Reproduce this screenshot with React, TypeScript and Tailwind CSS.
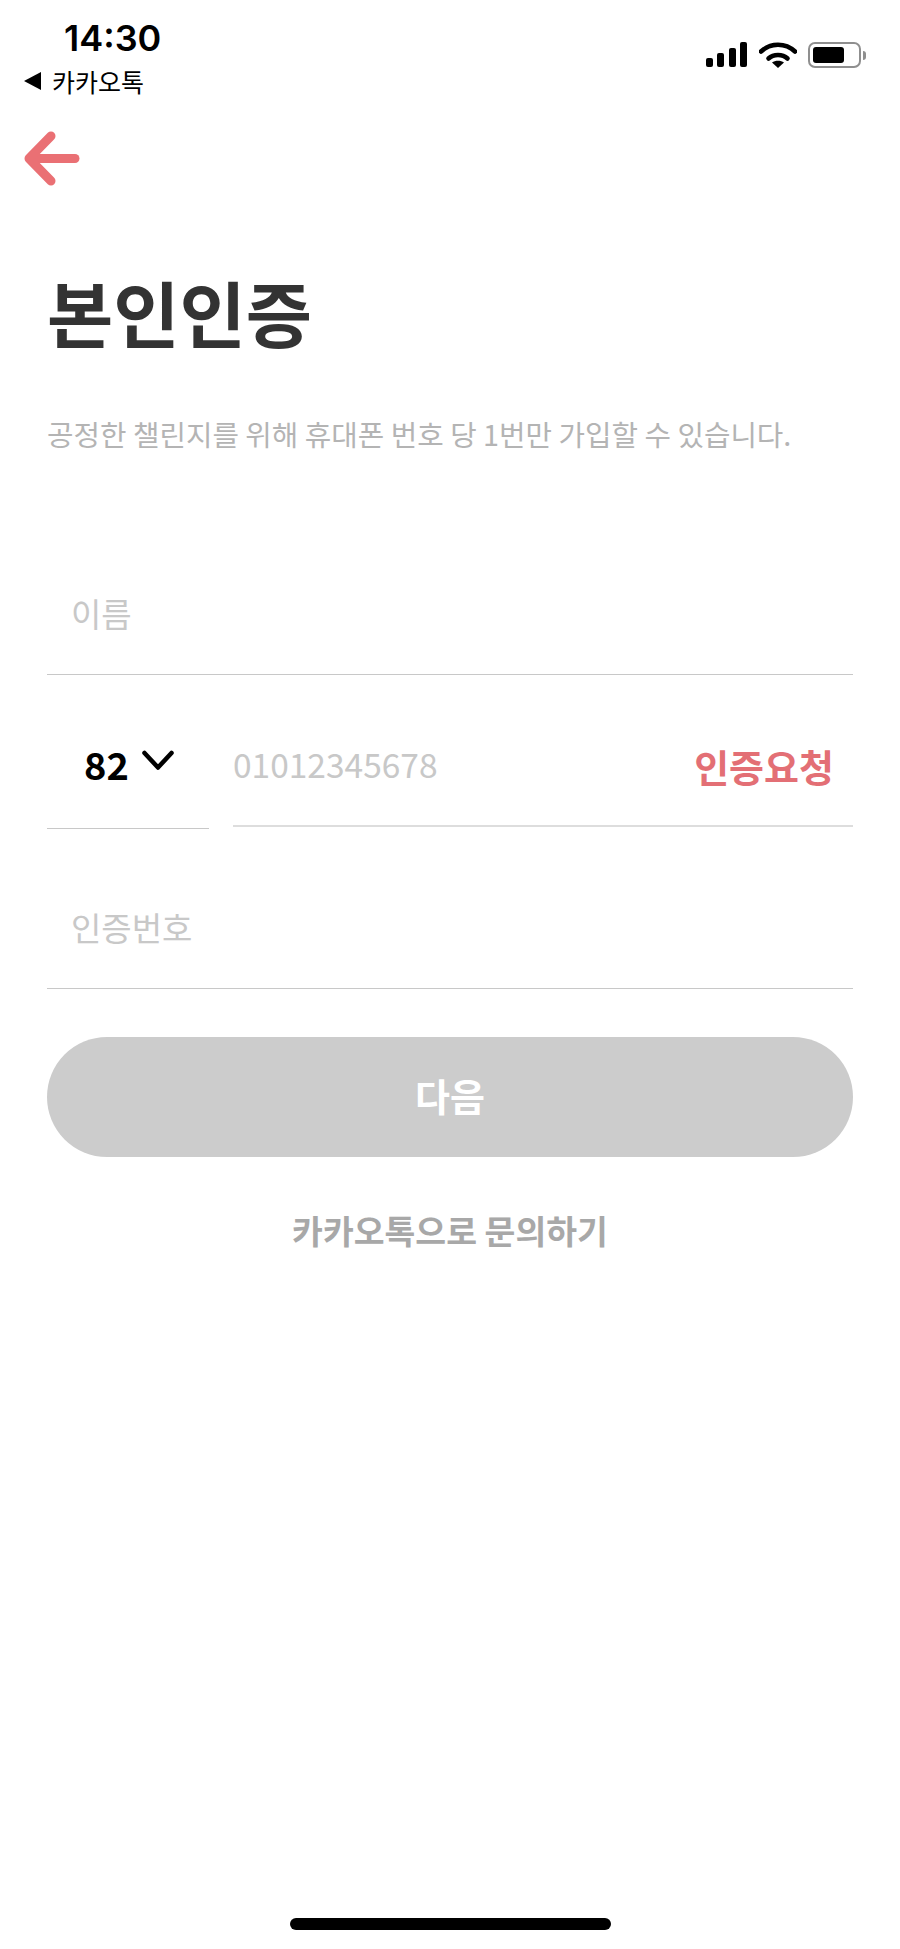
import React from "react";

const krFont = "font-['Noto_Sans_CJK_KR','Noto_Sans',sans-serif]";

const StatusIcons = () => (
  <div className="flex items-center gap-[11px]">
    <svg width="42" height="26" viewBox="0 0 42 26" fill="#000">
      <rect x="0" y="16" width="7" height="9" rx="2" />
      <rect x="11" y="11" width="7" height="14" rx="2" />
      <rect x="23" y="6" width="7" height="19" rx="2" />
      <rect x="34" y="0" width="7" height="25" rx="2" />
    </svg>
    <svg width="38" height="28" viewBox="0 0 38 28">
      <path d="M2 10.500C11.500 1.500 26.500 1.500 36 10.500" fill="none" stroke="#000" strokeWidth="4.600" strokeLinecap="round" />
      <path d="M9.500 17.500C14.500 12.800 23.500 12.800 28.500 17.500" fill="none" stroke="#000" strokeWidth="4.600" strokeLinecap="round" />
      <path d="M19 27L13 21.500C16.200 19 21.800 19 25 21.500Z" fill="#000" />
    </svg>
    <div className="flex items-center gap-[2px]">
      <div className="flex h-[26px] w-[53px] items-center rounded-[7px] border-[2px] border-[#8f8f8f] p-[3px]">
        <div className="h-full w-[31px] rounded-[3px] bg-black" />
      </div>
      <div className="h-[9px] w-[3px] rounded-r-[3px] bg-[#8f8f8f]" />
    </div>
  </div>
);

const Field = ({ label }: { label: string }) => (
  <div className="flex h-[96px] items-center border-b border-[#c8c8c8] pb-[26px] pl-[24px]">
    <span className="text-[33px] leading-none text-[#c8c8c8]">{label}</span>
  </div>
);

export default function App() {
  return (
    <div className={`flex h-[1949px] w-[900px] flex-col bg-white ${krFont}`}>
      {/* status bar */}
      <div className="flex items-start justify-between pr-[34px] pl-[24px]">
        <div className="flex flex-col">
          <span className="mt-[19px] ml-[40px] font-['Inter',sans-serif] text-[36px] leading-[38px] font-semibold text-black">14:30</span>
          <div className="mt-[9px] flex items-center gap-[9px]">
            <svg width="19" height="18" viewBox="0 0 19 18" fill="#000">
              <path d="M0 9L17 0V18Z" />
            </svg>
            <span className="text-[25px] leading-[30px] text-black">카카오톡</span>
          </div>
        </div>
        <div className="mt-[41px]">
          <StatusIcons />
        </div>
      </div>

      {/* back */}
      <div className="mt-[33px] pl-[22px]">
        <svg width="60" height="60" viewBox="0 0 60 60" fill="none" stroke="#ea7074" strokeWidth="9" strokeLinecap="round" strokeLinejoin="round">
          <path d="M53 29.500H8" />
          <path d="M29 7L7 29.500L29 52" />
        </svg>
      </div>

      <div className="flex flex-col px-[47px]">
        <h1 className="mt-[72px] text-[72px] leading-[100px] font-bold text-[#333333]">본인인증</h1>
        <p className="mt-[53px] text-[28.800px] leading-[40px] whitespace-nowrap text-[#b4b4b4]">공정한 챌린지를 위해 휴대폰 번호 당 1번만 가입할 수 있습니다.</p>

        <div className="mt-[125px]">
          <Field label="이름" />
        </div>

        {/* phone row */}
        <div className="mt-[58px] flex items-start gap-[24px]">
          <div className="flex h-[96px] w-[162px] items-start border-b border-[#c8c8c8] pl-[37px]">
            <span className="text-[38px] leading-[62px] font-bold text-black">82</span>
            <svg className="mt-[17px] ml-[13px]" width="32" height="22" viewBox="0 0 32 22" fill="none" stroke="#000" strokeWidth="4.500" strokeLinecap="round" strokeLinejoin="round">
              <path d="M2.500 3L16 17.500L29.500 3" />
            </svg>
          </div>
          <div className="flex h-[94px] flex-1 items-start justify-between border-b-2 border-[#dddddd] pr-[19px]">
            <span className="text-[33.500px] leading-[62px] text-[#c8c8c8]">01012345678</span>
            <span className="text-[38px] leading-[66px] font-bold text-[#e36f75]">인증요청</span>
          </div>
        </div>

        <div className="mt-[64px]">
          <Field label="인증번호" />
        </div>

        <button className="mt-[48px] flex h-[120px] w-full items-center justify-center rounded-full bg-[#cccccc] pb-[6px] text-[38px] font-bold text-white">다음</button>

        <p className="mt-[49px] text-center text-[33.500px] leading-[48px] font-bold text-[#a8a8a8]">카카오톡으로 문의하기</p>
      </div>

      {/* home indicator */}
      <div className="mt-auto mb-[19px] flex justify-center">
        <div className="h-[12px] w-[321px] rounded-full bg-black" />
      </div>
    </div>
  );
}
